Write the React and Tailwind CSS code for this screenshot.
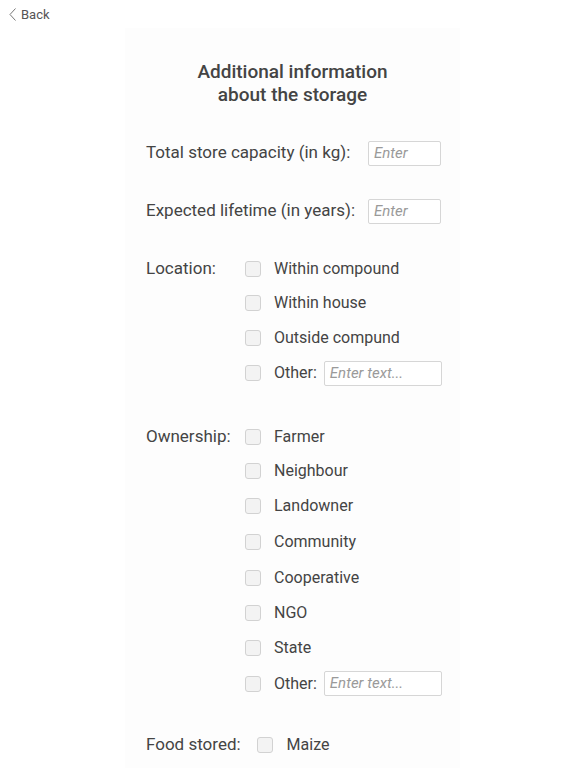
import React from 'react';

const Checkbox = () => (
  <span className="block w-[16px] h-[16px] shrink-0 rounded-[3px] border border-[#d2d2d2] bg-[#f3f3f3]" />
);

const TextBox = ({ placeholder, className }) => (
  <div className={`h-[25px] border border-[#d6d6d6] rounded-[2px] bg-white flex items-center px-[5px] ${className}`}>
    <span className="italic text-[15px] text-[#9a9a9a]">{placeholder}</span>
  </div>
);

const Option = ({ label, h, other }) => (
  <div className={`flex items-center text-[16px] ${h}`}>
    <Checkbox />
    <span className="ml-[13px]">{label}</span>
    {other && <TextBox placeholder="Enter text..." className="ml-[7px] w-[118px]" />}
  </div>
);

const Group = ({ title, options }) => (
  <div className="flex pl-[21px]">
    <div className="w-[99px] shrink-0 h-[34px] flex items-center">{title}</div>
    <div className="flex flex-col">
      {options.map((o) => (
        <Option key={o.label} {...o} />
      ))}
    </div>
  </div>
);

const location = [
  { label: 'Within compound', h: 'h-[34px]' },
  { label: 'Within house', h: 'h-[34px]' },
  { label: 'Outside compund', h: 'h-[35px]' },
  { label: 'Other:', h: 'h-[36px]', other: true },
];

const ownership = [
  { label: 'Farmer', h: 'h-[34px]' },
  { label: 'Neighbour', h: 'h-[34px]' },
  { label: 'Landowner', h: 'h-[35px]' },
  { label: 'Community', h: 'h-[37px]' },
  { label: 'Cooperative', h: 'h-[36px]' },
  { label: 'NGO', h: 'h-[34px]' },
  { label: 'State', h: 'h-[35px]' },
  { label: 'Other:', h: 'h-[37px]', other: true },
];

export default function App() {
  return (
    <div className="w-[576px] h-[768px] overflow-hidden bg-white text-[#444] text-[17px] font-['Roboto',sans-serif]">
      {/* header */}
      <div className="h-[28px] flex items-center pl-[9px] pt-[1px] text-[13px] text-[#555]">
        <svg width="8" height="13" viewBox="0 0 8 13" className="mr-[4px]">
          <polyline points="6.5,0.5 1,6.5 6.5,12.5" fill="none" stroke="#777" strokeWidth="1" />
        </svg>
        <span>Back</span>
      </div>

      <div className="ml-[125px] w-[335px] h-[740px] bg-[#fdfdfd] pt-[32px]">
        <h1 className="text-center text-[19px] leading-[23px] font-medium text-[#444]">
          Additional information
          <br />
          about the storage
        </h1>

        <div className="pr-[19px]">
          <div className="mt-[30px] h-[34px] flex items-center justify-between pl-[21px]">
            <span>Total store capacity (in kg):</span>
            <TextBox placeholder="Enter" className="w-[73px]" />
          </div>

          <div className="mt-[24px] h-[34px] flex items-center justify-between pl-[21px]">
            <span>Expected lifetime (in years):</span>
            <TextBox placeholder="Enter" className="w-[73px]" />
          </div>

          <div className="mt-[24px]">
            <Group title="Location:" options={location} />
          </div>

          <div className="mt-[29px]">
            <Group title="Ownership:" options={ownership} />
          </div>

          <div className="mt-[26px] h-[34px] flex items-center pl-[21px]">
            <span>Food stored:</span>
            <span className="ml-[16px]"><Checkbox /></span>
            <span className="ml-[14px] text-[16px]">Maize</span>
          </div>
        </div>
      </div>
    </div>
  );
}
